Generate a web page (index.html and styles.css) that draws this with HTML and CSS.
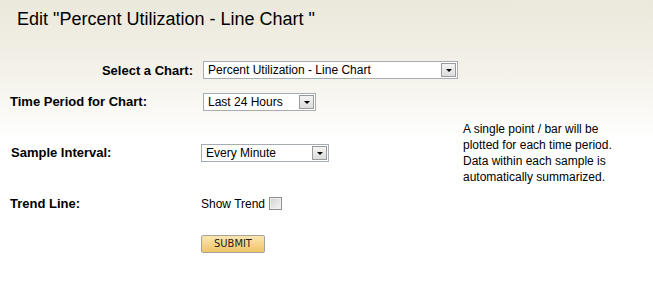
FILE: index.html
```html
<!DOCTYPE html>
<html>
<head>
<meta charset="utf-8">
<link rel="stylesheet" href="styles.css">
</head>
<body>
<div class="page">
  <h1 class="title">Edit "Percent Utilization - Line Chart "</h1>
  <form class="form">
    <div class="label label-right r1">Select a Chart:</div>
    <div class="control r1">
      <div class="select w-chart"><span class="select-text">Percent Utilization - Line Chart</span><span class="select-btn"><span class="tri"></span></span></div>
    </div>

    <div class="label r2">Time Period for Chart:</div>
    <div class="control r2">
      <div class="select w-period"><span class="select-text">Last 24 Hours</span><span class="select-btn"><span class="tri"></span></span></div>
    </div>

    <div class="label label-indent r3">Sample Interval:</div>
    <div class="control shift r3">
      <div class="select w-interval"><span class="select-text">Every Minute</span><span class="select-btn"><span class="tri"></span></span></div>
    </div>
    <div class="help r3">A single point / bar will be plotted for each time period. Data within each sample is automatically summarized.</div>

    <div class="label r4">Trend Line:</div>
    <div class="control shift r4 trend">
      <span class="trend-text">Show Trend</span><span class="checkbox"></span>
    </div>

    <div class="control shift r5">
      <button type="button" class="submit">SUBMIT</button>
    </div>
  </form>
</div>
</body>
</html>
```
FILE: styles.css
```css
html, body {
  margin: 0;
  padding: 0;
  background: #ffffff;
}
body {
  font-family: "Liberation Sans", Arial, sans-serif;
  color: #000;
}
.page {
  width: 653px;
  height: 289px;
  background: linear-gradient(to bottom, #ebe8dc 0px, #f3f1e8 70px, #ffffff 140px);
  overflow: hidden;
}
.title {
  margin: 0;
  padding: 9px 0 0 17px;
  height: 46px;
  box-sizing: border-box;
  font-size: 18px;
  font-weight: normal;
  line-height: 20px;
}
.form {
  display: grid;
  grid-template-columns: 183px 250px 180px;
  grid-template-rows: 30px 33px 69px 32px 49px;
  column-gap: 10px;
  padding-left: 10px;
  margin-top: 9px;
  align-items: center;
}
.r1 { grid-row: 1; }
.r2 { grid-row: 2; }
.r3 { grid-row: 3; }
.r4 { grid-row: 4; }
.r5 { grid-row: 5; }
.label {
  grid-column: 1;
  font-size: 13px;
  font-weight: bold;
  line-height: 15px;
  white-space: nowrap;
}
.label-right { text-align: right; }
.label-indent { padding-left: 1px; }
.control {
  grid-column: 2;
  display: flex;
  align-items: center;
}
.control.shift { margin-left: -2px; }
.help {
  grid-column: 3;
  font-size: 12px;
  line-height: 16px;
  width: 160px;
}
.select {
  display: flex;
  flex-shrink: 0;
  align-items: center;
  height: 18px;
  box-sizing: border-box;
  border: 1px solid #a5acb2;
  background: #fff;
  font-size: 12px;
}
.select-text {
  flex: 1;
  padding-left: 4px;
  line-height: 14px;
  white-space: nowrap;
  overflow: hidden;
}
.select-btn {
  width: 15px;
  height: 14px;
  margin-right: 1px;
  box-sizing: border-box;
  border: 1px solid #9a9a9a;
  background: linear-gradient(to bottom, #f4f4f4, #dcdcdc);
  display: flex;
  align-items: center;
  justify-content: center;
}
.tri {
  width: 0;
  height: 0;
  border-left: 3px solid transparent;
  border-right: 3px solid transparent;
  border-top: 3px solid #000;
  margin-top: 1px;
}
.w-chart { width: 255px; }
.w-period { width: 113px; }
.w-interval { width: 128px; }
.trend { font-size: 12px; }
.trend-text { line-height: 14px; margin-top: 2px; }
.checkbox {
  display: inline-block;
  width: 13px;
  height: 13px;
  box-sizing: border-box;
  margin-left: 4px;
  border: 1px solid #8e8f8f;
  background: linear-gradient(135deg, #d0d0d0, #f6f6f6);
  box-shadow: inset 0 0 0 1px #f0f0f0;
}
.submit {
  width: 64px;
  height: 18px;
  padding: 0;
  margin: 0;
  border: 1px solid #a8a39a;
  border-radius: 2px;
  background: linear-gradient(to bottom, #fbe6b0 0%, #f5d58a 50%, #efc56a 100%);
  font-family: "DejaVu Sans Condensed", "DejaVu Sans", sans-serif;
  font-size: 11px;
  line-height: 16px;
  color: #222;
}
```
